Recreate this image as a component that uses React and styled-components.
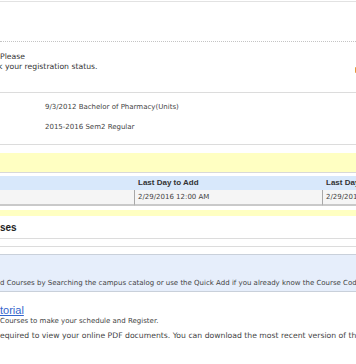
import React from "react";
import styled, { createGlobalStyle } from "styled-components";

const GlobalStyle = createGlobalStyle`
  html, body { margin: 0; padding: 0; background: #fff; overflow: hidden; }
  body { font-family: "DejaVu Sans", Verdana, sans-serif; color: #333; }
  * { box-sizing: content-box; }
`;

const Page = styled.div`
  width: 420px;
`;

const TopSection = styled.div`
  margin-top: 1px;
  height: 39px;
  border-top: 1px solid #e2e2e2;
  border-bottom: 1px dotted #c4c4c4;
`;

const Message = styled.div`
  padding: 10px 0 19px;
  border-bottom: 1px solid #dcdcdc;
`;

const MessageRow = styled.div`
  width: 362px;
  display: flex;
  justify-content: space-between;
  align-items: flex-start;
`;

const MessageText = styled.div`
  font-size: 7.7px;
  line-height: 10px;
  color: #333;
`;

const Line = styled.div`
  margin-left: ${(p) => p.$shift || 0}px;
  white-space: nowrap;
`;

const WarnIcon = styled.span`
  width: 7px;
  height: 6px;
  margin-top: 15px;
  background: #e29a3c;
  border-radius: 1px;
`;

const Info = styled.div`
  padding: 4px 0 7px 45px;
  border-bottom: 1px solid #dcdcdc;
  font-size: 7px;
  line-height: 20px;
  color: #444;
`;

const YellowBand = styled.div`
  margin-top: ${(p) => p.$gap}px;
  height: ${(p) => p.$h}px;
  background: #ffffc2;
  border-bottom: ${(p) => (p.$rule ? "1px solid #d8d8d8" : "none")};
`;

const Table = styled.div`
  margin-top: 3px;
  display: grid;
  grid-template-columns: 134px 188px 98px;
  font-family: "Liberation Sans", Arial, sans-serif;
`;

const HeadCell = styled.div`
  height: 14px;
  line-height: 13px;
  padding-left: ${(p) => (p.$first ? 0 : 4)}px;
  background: #d8e8fb;
  font-weight: bold;
  font-size: 8px;
  color: #333;
  white-space: nowrap;
  overflow: hidden;
`;

const BodyCell = styled.div`
  height: 14px;
  line-height: 14px;
  padding-left: ${(p) => (p.$first ? 0 : 3)}px;
  background: #f5f5f5;
  border-left: ${(p) => (p.$first ? "none" : "1px solid #a8a8a8")};
  border-bottom: 2px solid #c9c9c9;
  font-family: "DejaVu Sans", Verdana, sans-serif;
  font-size: 7px;
  color: #444;
  white-space: nowrap;
  overflow: hidden;
`;

const Heading = styled.div`
  padding: 6px 0 5px;
  line-height: 11px;
  font-family: "Liberation Sans", Arial, sans-serif;
  font-weight: bold;
  font-size: 10px;
  color: #222;
  border-bottom: 1px solid #dcdcdc;
`;

const Divider = styled.div`
  margin-top: 7px;
  border-top: 1px solid #dcdcdc;
`;

const HintBox = styled.div`
  margin-top: 7px;
  padding: 23px 0 3px;
  background: #e6eefb;
  border: 1px solid #c9d0da;
  border-left: none;
  font-size: 7px;
  line-height: 10px;
  color: #444;
  white-space: nowrap;
`;

const Tutorial = styled.div`
  margin-top: 12px;
`;

const TutorialLink = styled.a`
  display: block;
  font-family: "Liberation Sans", Arial, sans-serif;
  font-size: 11px;
  line-height: 13px;
  color: #3366cc;
  text-decoration: underline;
`;

const Note = styled.div`
  margin-top: ${(p) => p.$gap || 0}px;
  font-size: ${(p) => p.$size}px;
  line-height: ${(p) => p.$lh}px;
  color: #444;
  white-space: nowrap;
`;

export default function App() {
  return (
    <Page>
      <GlobalStyle />
      <TopSection />
      <Message>
        <MessageRow>
          <MessageText>
            <Line>Please</Line>
            <Line $shift={-2}>k your registration status.</Line>
          </MessageText>
          <WarnIcon />
        </MessageRow>
      </Message>
      <Info>
        <div>9/3/2012 Bachelor of Pharmacy(Units)</div>
        <div>2015-2016 Sem2 Regular</div>
      </Info>
      <YellowBand $gap={8} $h={19} $rule />
      <Table>
        <HeadCell $first />
        <HeadCell>Last Day to Add</HeadCell>
        <HeadCell>Last Day to Drop</HeadCell>
        <BodyCell $first />
        <BodyCell>2/29/2016 12:00 AM</BodyCell>
        <BodyCell>2/29/2016 12:00 AM</BodyCell>
      </Table>
      <YellowBand $gap={4} $h={6} />
      <Heading>ses</Heading>
      <Divider />
      <HintBox>
        d Courses by Searching the campus catalog or use the Quick Add if you already know the Course Code.
      </HintBox>
      <Tutorial>
        <TutorialLink href="#">torial</TutorialLink>
        <Note $size={7} $lh={9}>Courses to make your schedule and Register.</Note>
        <Note $size={7.7} $lh={10} $gap={5}>
          equired to view your online PDF documents. You can download the most recent version of the reader.
        </Note>
      </Tutorial>
    </Page>
  );
}
